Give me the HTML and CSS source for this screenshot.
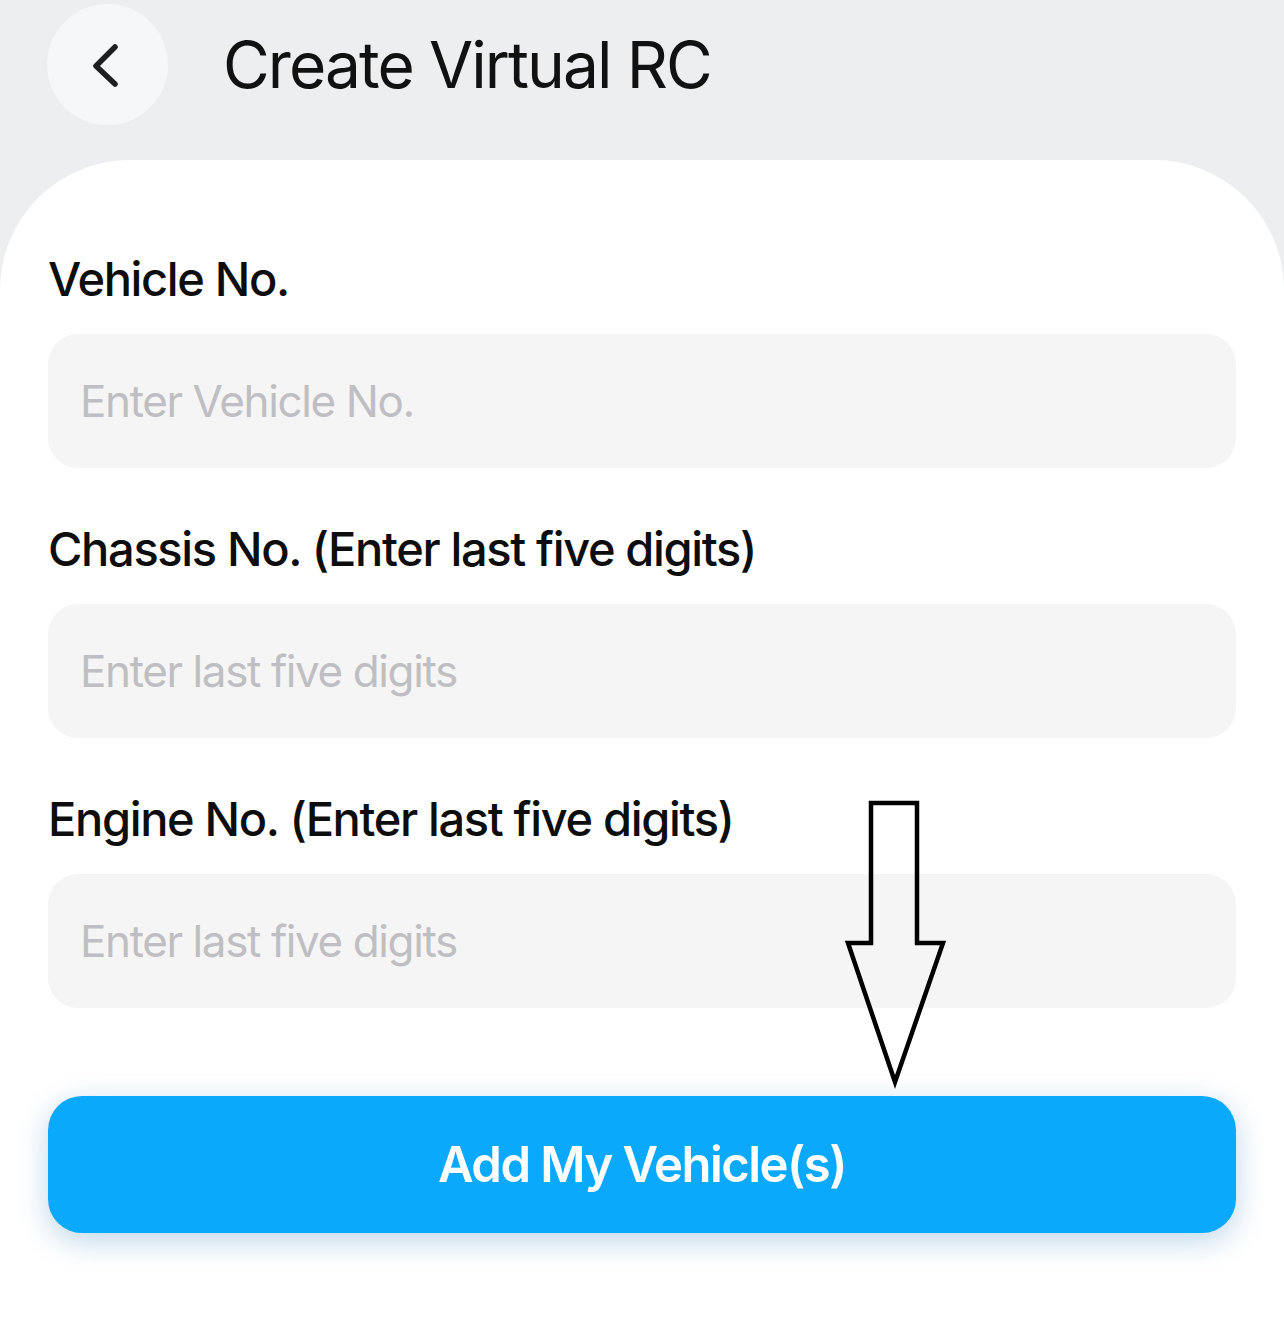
FILE: index.html
```html
<!DOCTYPE html>
<html lang="en">
<head>
<meta charset="utf-8">
<title>Create Virtual RC</title>
<link rel="stylesheet" href="styles.css">
</head>
<body>
<div class="page">
  <header class="topbar">
    <button class="back" aria-label="Back">
      <svg width="40" height="60" viewBox="0 0 40 60">
        <path d="M29 9 L10 28 L29 46" fill="none" stroke="#1f1f21" stroke-width="5.5" stroke-linecap="round" stroke-linejoin="round"/>
      </svg>
    </button>
    <h1 class="title">Create Virtual RC</h1>
  </header>
  <main class="card">
    <div class="field">
      <label class="label">Vehicle No.</label>
      <div class="input">Enter Vehicle No.</div>
    </div>
    <div class="field">
      <label class="label">Chassis No. (Enter last five digits)</label>
      <div class="input">Enter last five digits</div>
    </div>
    <div class="field">
      <label class="label">Engine No. (Enter last five digits)</label>
      <div class="input">Enter last five digits</div>
    </div>
    <button class="submit">Add My Vehicle(s)</button>
  </main>
  <svg class="arrow" width="110" height="300" viewBox="0 0 110 300">
    <polygon points="33,5 79,5 79,145 105,145 57,284 10,145 33,145" fill="none" stroke="#000" stroke-width="4.5" stroke-linejoin="miter"/>
  </svg>
</div>
</body>
</html>
```
FILE: styles.css
```css
html, body {
  margin: 0;
  padding: 0;
  background: #ffffff;
}
body {
  font-family: Inter, "Noto Sans", "Liberation Sans", sans-serif;
  color: #111111;
}
.page {
  position: relative;
  width: 1284px;
  min-height: 1324px;
  background: #eceef0;
  display: flex;
  flex-direction: column;
}
.topbar {
  height: 160px;
  display: flex;
  align-items: flex-start;
  padding-left: 47px;
  box-sizing: border-box;
}
.back {
  margin-top: 4px;
  width: 121px;
  height: 121px;
  border-radius: 50%;
  border: none;
  background: #f6f7f8;
  display: flex;
  align-items: center;
  justify-content: center;
  padding: 0;
  padding-right: 4px;
  padding-top: 6px;
}
.title {
  margin: 0;
  margin-left: 55px;
  margin-top: 26px;
  font-size: 64px;
  font-weight: 400;
  line-height: 78px;
  letter-spacing: -1.9px;
  color: #111111;
}
.card {
  flex: 1;
  background: #ffffff;
  border-radius: 130px 130px 0 0;
  padding: 90px 48px 80px;
  display: flex;
  flex-direction: column;
  gap: 52px;
}
.field {
  display: flex;
  flex-direction: column;
  gap: 26px;
}
.label {
  font-size: 47px;
  line-height: 58px;
  font-weight: 500;
  color: #0d0d0d;
  letter-spacing: -1.35px;
}
.input {
  height: 134px;
  box-sizing: border-box;
  background: #f5f5f6;
  border-radius: 30px;
  padding-left: 32px;
  display: flex;
  align-items: center;
  font-size: 44px;
  color: #bfbfc3;
  letter-spacing: -1.4px;
}
.submit {
  margin-top: 36px;
  height: 137px;
  border: none;
  border-radius: 34px;
  background: #0aa9fc;
  color: #ffffff;
  font-family: Inter, "Noto Sans", "Liberation Sans", sans-serif;
  font-size: 49px;
  font-weight: 600;
  letter-spacing: -1.5px;
  box-shadow: 0 8px 30px rgba(20, 110, 180, 0.28);
}
.arrow {
  position: absolute;
  left: 838px;
  top: 798px;
}
```
